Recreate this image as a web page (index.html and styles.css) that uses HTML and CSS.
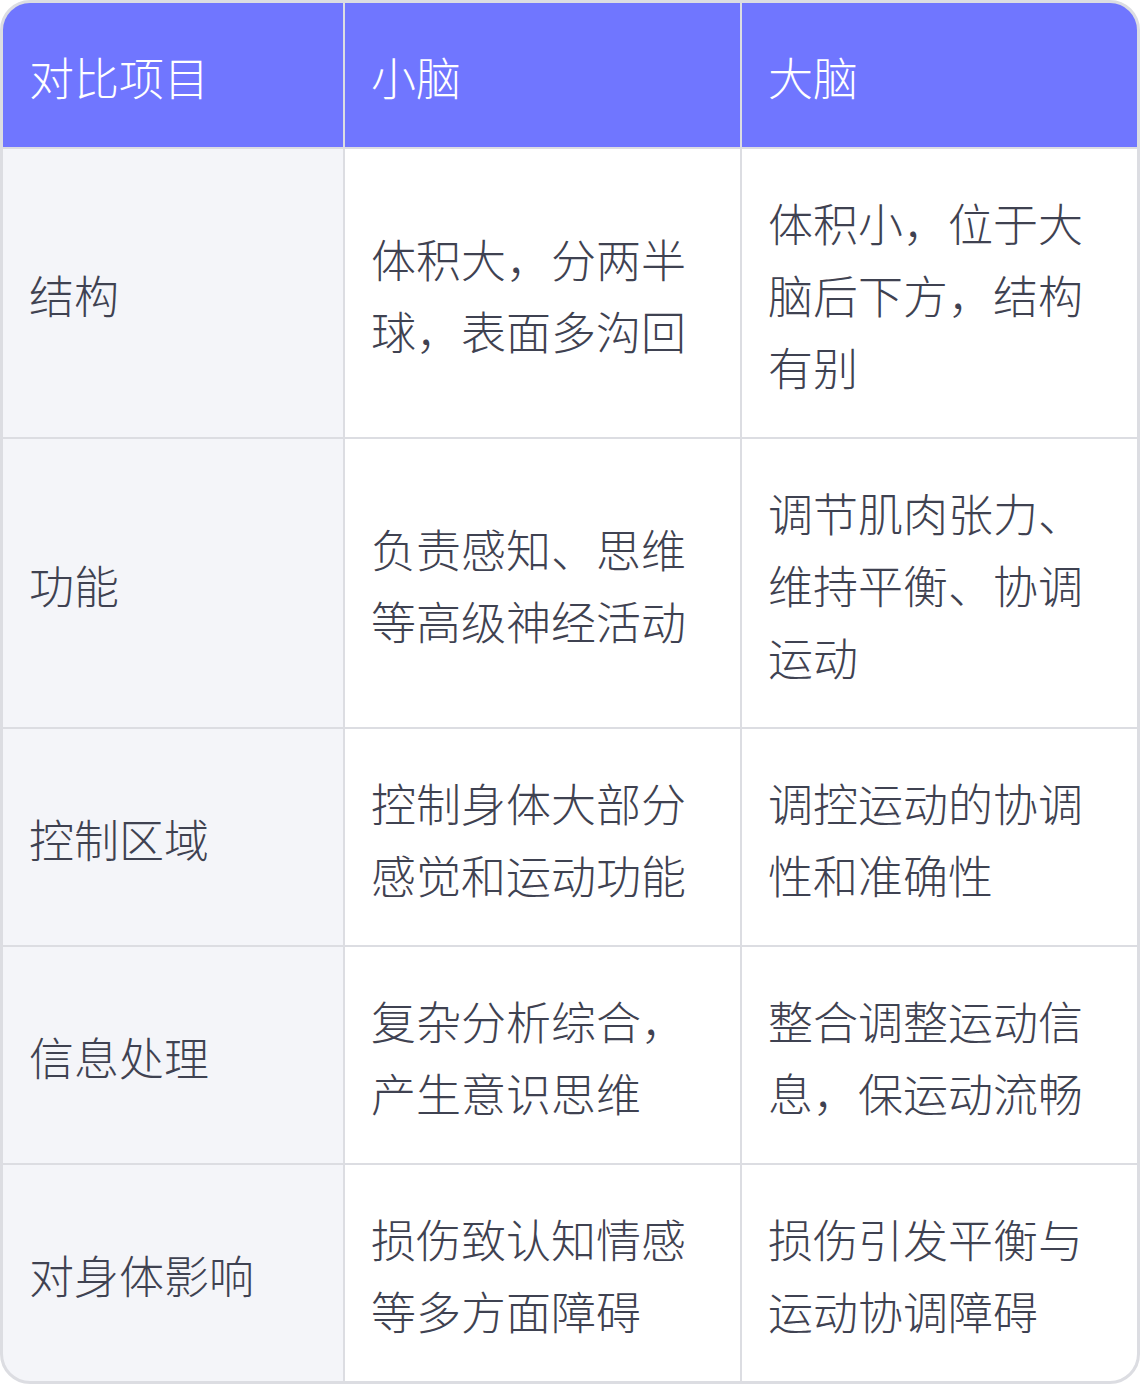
FILE: index.html
```html
<!DOCTYPE html>
<html lang="zh">
<head>
<meta charset="utf-8">
<link rel="stylesheet" href="styles.css">
</head>
<body>
<div class="table">
  <div class="cell head">对比项目</div>
  <div class="cell head">小脑</div>
  <div class="cell head">大脑</div>

  <div class="cell label">结构</div>
  <div class="cell">体积大，分两半球，表面多沟回</div>
  <div class="cell">体积小，位于大脑后下方，结构有别</div>

  <div class="cell label">功能</div>
  <div class="cell">负责感知、思维等高级神经活动</div>
  <div class="cell">调节肌肉张力、维持平衡、协调运动</div>

  <div class="cell label">控制区域</div>
  <div class="cell">控制身体大部分感觉和运动功能</div>
  <div class="cell">调控运动的协调性和准确性</div>

  <div class="cell label">信息处理</div>
  <div class="cell">复杂分析综合，产生意识思维</div>
  <div class="cell">整合调整运动信息，保运动流畅</div>

  <div class="cell label">对身体影响</div>
  <div class="cell">损伤致认知情感等多方面障碍</div>
  <div class="cell">损伤引发平衡与运动协调障碍</div>
</div>
</body>
</html>
```
FILE: styles.css
```css
html, body {
  margin: 0;
  padding: 0;
  background: #ffffff;
}
.table {
  box-sizing: border-box;
  width: 1140px;
  height: 1384px;
  border: 3px solid #dcdde2;
  border-radius: 30px;
  overflow: hidden;
  display: grid;
  grid-template-columns: 340px 395px 395px;
  grid-template-rows: 144px 288px 288px 216px 216px 216px;
  gap: 2px;
  background: #dcdde2;
  font-family: "Noto Sans CJK SC", "Noto Sans", sans-serif;
  font-weight: 300;
  font-size: 45px;
  line-height: 72px;
  color: #3f4251;
}
.cell {
  box-sizing: border-box;
  background: #ffffff;
  padding: 38px 27px 34px 26px;
  display: flex;
  align-items: center;
}
.head {
  background: #7076ff;
  color: #ffffff;
}
.label {
  background: #f4f5f9;
}
```
